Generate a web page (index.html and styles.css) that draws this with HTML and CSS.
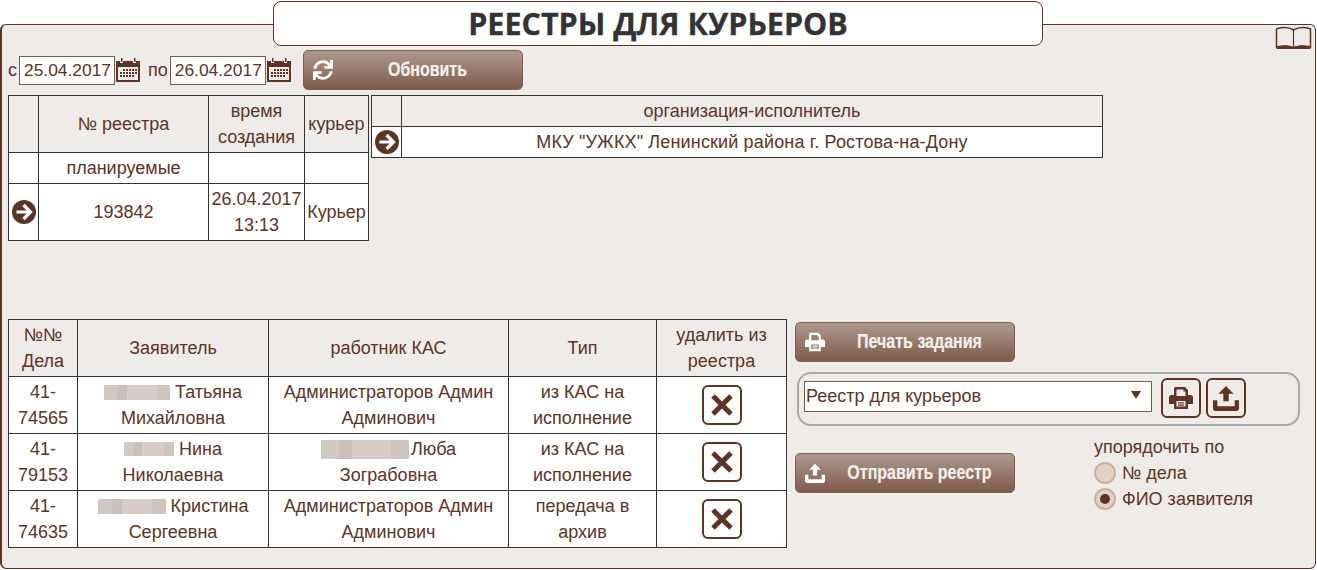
FILE: index.html
```html
<!DOCTYPE html>
<html lang="ru">
<head>
<meta charset="utf-8">
<title>Реестры для курьеров</title>
<link rel="stylesheet" href="styles.css">
</head>
<body>
<svg class="defs" width="0" height="0">
  <symbol id="i-cal" viewBox="0 0 24 24">
    <path fill="#5e3425" d="M0 3h4v2h3V3h10v2h3V3h4v21H0z"/>
    <path fill="#5e3425" d="M5 0h1.500v4H5zM18 0h1.500v4H18z"/>
    <path fill="#efebe8" d="M2 9h20v13H2z"/>
    <path fill="#5e3425" d="M7 11h2v2H7zM10 11h2v2h-2zM13 11h2v2h-2zM16 11h2v2h-2zM19 11h2v2h-2zM4 14h2v2H4zM7 14h2v2H7zM10 14h2v2h-2zM13 14h2v2h-2zM16 14h2v2h-2zM19 14h2v2h-2zM4 17h2v2H4zM7 17h2v2H7zM10 17h2v2h-2zM13 17h2v2h-2zM16 17h2v2h-2z"/>
  </symbol>
  <symbol id="i-sync" viewBox="0 0 512 512">
    <path fill="currentColor" d="M440.650 12.570l4 82.770A247.160 247.160 0 0 0 255.830 8C134.730 8 33.910 94.920 12.290 209.820A12 12 0 0 0 24.090 224h49.050a12 12 0 0 0 11.670-9.260 175.910 175.910 0 0 1 317-56.940l-101.460-4.860a12 12 0 0 0-12.570 12v47.410a12 12 0 0 0 12 12H500a12 12 0 0 0 12-12V12a12 12 0 0 0-12-12h-47.370a12 12 0 0 0-11.980 12.570zM255.830 432a175.610 175.610 0 0 1-146-77.800l101.800 4.870a12 12 0 0 0 12.570-12v-47.400a12 12 0 0 0-12-12H12a12 12 0 0 0-12 12V500a12 12 0 0 0 12 12h47.350a12 12 0 0 0 12-12.600l-4.150-82.570A247.170 247.170 0 0 0 255.830 504c121.110 0 221.930-86.920 243.550-201.820a12 12 0 0 0-11.800-14.180h-49.050a12 12 0 0 0-11.670 9.260A175.860 175.860 0 0 1 255.830 432z"/>
  </symbol>
  <symbol id="i-print" viewBox="0 0 24 24">
    <path fill="currentColor" fill-rule="evenodd" d="M6 1h10l3 3v5h2.500A2.500 2.500 0 0 1 24 11.500V18h-5v5H5v-5H0v-6.500A2.500 2.500 0 0 1 2.500 9H5V2.500A1.500 1.500 0 0 1 6 1zM7.500 3.500V10h9V5.500h-2v-2zM7.500 15v5.500h9V15zM9 16.300h6v1.300H9zM9 18.500h6v1.200H9z"/>
  </symbol>
  <symbol id="i-up" viewBox="0 0 24 24">
    <path fill="currentColor" d="M12 1l7 7h-4.500v7h-5V8H5zM0 14h4v5.500h16V14h4v7.500a2.500 2.500 0 0 1-2.500 2.500h-19A2.500 2.500 0 0 1 0 21.500z"/>
  </symbol>
  <symbol id="i-go" viewBox="0 0 24 24">
    <circle cx="12" cy="12" r="12" fill="#5e3425"/>
    <path fill="none" stroke="#fff" stroke-width="3.200" d="M4.500 12h13.500M11.500 5l7 7-7 7"/>
  </symbol>
  <symbol id="i-x" viewBox="0 0 24 24">
    <path fill="none" stroke="#5e3425" stroke-width="5" d="M3 3l18 18M21 3L3 21"/>
  </symbol>
</svg>

<main class="panel">
  <h1 class="title">РЕЕСТРЫ ДЛЯ КУРЬЕРОВ</h1>
  <svg class="book" viewBox="0 0 36 24" aria-hidden="true">
    <path fill="#efebe8" stroke="#5e3425" stroke-width="1.500" d="M1 21V3c6-2 12-2 17 1 5-3 11-3 17-1v18c-6-1.500-12-1.500-17 1-5-2.500-11-2.500-17-1z"/>
    <path fill="none" stroke="#5e3425" stroke-width="1.200" d="M18 4v18"/>
    <path fill="#5e3425" d="M1 23v-2c6-2 12-2 17 0 5-2 11-2 17 0v2z"/>
  </svg>

  <form class="filter">
    <label class="lbl">с</label>
    <span class="date">25.04.2017</span>
    <svg class="cal"><use href="#i-cal"/></svg>
    <label class="lbl lbl-po">по</label>
    <span class="date">26.04.2017</span>
    <svg class="cal"><use href="#i-cal"/></svg>
    <button type="button" class="btn btn-refresh"><svg class="btn-ic ic-sync"><use href="#i-sync"/></svg><span>Обновить</span></button>
  </form>

  <section class="top-tables">
    <table class="grid t-reg">
      <colgroup><col class="c30"><col class="c170"><col class="c96"><col class="c64"></colgroup>
      <tr class="head"><th></th><th>№ реестра</th><th>время создания</th><th class="nw">курьер</th></tr>
      <tr><td></td><td>планируемые</td><td></td><td></td></tr>
      <tr><td class="go"><svg class="go-ic"><use href="#i-go"/></svg></td><td>193842</td><td>26.04.2017 13:13</td><td class="nw">Курьер</td></tr>
    </table>
    <table class="grid t-org">
      <colgroup><col class="c30"><col></colgroup>
      <tr class="head"><th></th><th>организация-исполнитель</th></tr>
      <tr><td class="go"><svg class="go-ic"><use href="#i-go"/></svg></td><td class="org-name">МКУ "УЖКХ" Ленинский района г. Ростова-на-Дону</td></tr>
    </table>
  </section>

  <section class="bottom">
    <table class="grid t-main">
      <colgroup><col class="c69"><col class="c191"><col class="c240"><col class="c148"><col class="c130"></colgroup>
      <tr class="head"><th>№№ Дела</th><th>Заявитель</th><th>работник КАС</th><th>Тип</th><th>удалить из реестра</th></tr>
      <tr>
        <td>41-74565</td>
        <td><span class="blur b1"></span> Татьяна Михайловна</td>
        <td>Администраторов Админ Админович</td>
        <td>из КАС на исполнение</td>
        <td class="act"><span class="x-btn"><svg class="x-ic"><use href="#i-x"/></svg></span></td>
      </tr>
      <tr>
        <td>41-79153</td>
        <td><span class="blur b2"></span> Нина Николаевна</td>
        <td><span class="blur b3"></span> Люба Зограбовна</td>
        <td>из КАС на исполнение</td>
        <td class="act"><span class="x-btn"><svg class="x-ic"><use href="#i-x"/></svg></span></td>
      </tr>
      <tr>
        <td>41-74635</td>
        <td><span class="blur b4"></span> Кристина Сергеевна</td>
        <td>Администраторов Админ Админович</td>
        <td>передача в архив</td>
        <td class="act"><span class="x-btn"><svg class="x-ic"><use href="#i-x"/></svg></span></td>
      </tr>
    </table>

    <aside class="side">
      <button type="button" class="btn btn-print"><svg class="btn-ic"><use href="#i-print"/></svg><span>Печать задания</span></button>
      <div class="report-box">
        <div class="select">Реестр для курьеров<span class="caret"></span></div>
        <span class="icon-btn"><svg class="ib-ic ib-print"><use href="#i-print"/></svg></span>
        <span class="icon-btn"><svg class="ib-ic"><use href="#i-up"/></svg></span>
      </div>
      <div class="side-row">
        <button type="button" class="btn btn-send"><svg class="btn-ic"><use href="#i-up"/></svg><span>Отправить реестр</span></button>
        <div class="sort">
          <div class="sort-title">упорядочить по</div>
          <div class="radio-row"><span class="radio"></span>№ дела</div>
          <div class="radio-row"><span class="radio on"></span>ФИО заявителя</div>
        </div>
      </div>
    </aside>
  </section>
</main>
</body>
</html>
```
FILE: styles.css
```css
* { box-sizing: border-box; }
html, body { margin: 0; padding: 0; }
body {
  width: 1317px;
  height: 570px;
  overflow: hidden;
  background: #fff;
  font-family: "Liberation Sans", Arial, sans-serif;
  font-size: 18px;
  line-height: 26px;
  color: #5e3425;
}
.defs { display: block; height: 0; }

.panel {
  position: relative;
  width: 1316px;
  height: 545px;
  margin-top: 24px;
  padding: 0 6px;
  background: #efebe8;
  border: 1px solid #5e3425;
  border-left-width: 2px;
  border-radius: 6px;
}
.title {
  width: 770px;
  height: 45px;
  margin: -24px 0 0 265px;
  background: #fff;
  border: 1px solid #5e3425;
  border-radius: 8px;
  text-align: center;
  font-family: "Open Sans", sans-serif;
  font-weight: 700;
  font-size: 30.5px;
  line-height: 43px;
  color: #333;
  -webkit-text-stroke: 0.3px #333;
}
.book {
  position: absolute;
  top: 1px;
  right: 3px;
  width: 37px;
  height: 24px;
}

.filter {
  display: flex;
  align-items: center;
  height: 40px;
  margin-top: 4px;
}
.lbl { margin-right: 2px; }
.lbl-po { margin-left: 8px; margin-right: 2px; }
.date {
  width: 96px;
  height: 29px;
  padding: 0 0 0 4px;
  background: #fff;
  border: 1px solid #7a5a4a;
  font-size: 17.4px;
  line-height: 27px;
  white-space: nowrap;
}
.cal { width: 24px; height: 24px; margin-left: 1px; }

.btn {
  display: flex;
  align-items: center;
  width: 220px;
  height: 40px;
  padding: 0;
  border: 1px solid #7d5e50;
  border-radius: 5px;
  background: linear-gradient(#ad988c 0%, #a28a7d 25%, #8a6a5b 75%, #7f5c4d 100%);
  color: #f3eeeb;
  font-family: "Liberation Sans", sans-serif;
  font-weight: 700;
  font-size: 20px;
}
.btn span {
  flex: 1;
  padding-bottom: 2px;
  text-align: center;
  white-space: nowrap;
  transform: scaleX(0.8);
  -webkit-text-stroke: 0.2px #f3eeeb;
}
.btn-ic { width: 20px; height: 20px; margin-left: 9px; color: #fff; flex: none; }
.btn-refresh { margin-left: 12px; }

.top-tables {
  display: flex;
  align-items: flex-start;
  gap: 2px;
  margin-top: 5px;
}
.grid {
  border-collapse: collapse;
  table-layout: fixed;
  font-weight: 400;
}
.grid th, .grid td {
  border: 1px solid #333;
  padding: 2px;
  text-align: center;
  vertical-align: middle;
  font-weight: 400;
  background: #fff;
}
.grid .head th { background: #efebe8; }
.grid .org-name { letter-spacing: 0.15px; }
.t-reg { width: 360px; }
.t-org { width: 732px; }
.t-main { width: 778px; }
.c30 { width: 30px; }
.c170 { width: 170px; }
.c96 { width: 96px; }
.c64 { width: 64px; }
.c69 { width: 69px; }
.c191 { width: 191px; }
.c240 { width: 240px; }
.c148 { width: 148px; }
.c130 { width: 130px; }
.grid .nw { padding: 2px 0; white-space: nowrap; }
.grid .go { padding: 0; line-height: 0; }
.go-ic { width: 24px; height: 24px; vertical-align: middle; }

.bottom {
  display: flex;
  align-items: flex-start;
  margin-top: 78px;
}
.blur {
  display: inline-block;
  height: 15px;
  vertical-align: -2px;
  background: linear-gradient(90deg, #d3c9c4 0 20%, #cbbfb9 20% 35%, #d6cdc8 35% 80%, #cfc5bf 80% 100%);
}
.b1 { width: 66px; }
.b2 { width: 50px; height: 14px; vertical-align: -1px; }
.b3 { width: 88px; height: 19px; margin-right: -3px; vertical-align: -4px; }
.b4 { width: 68px; }
.act { line-height: 0; }
.x-btn {
  display: inline-flex;
  align-items: center;
  justify-content: center;
  width: 40px;
  height: 40px;
  background: #fff;
  border: 2px solid #5e3425;
  border-radius: 6px;
  vertical-align: middle;
}
.x-ic { width: 24px; height: 24px; }

.side {
  width: 505px;
  margin-left: 8px;
  padding-top: 3px;
}
.report-box {
  display: flex;
  align-items: flex-start;
  width: 503px;
  height: 54px;
  margin: 10px 0 0 2px;
  padding-left: 5px;
  border: 2px solid #aaa;
  border-radius: 14px;
}
.select {
  position: relative;
  width: 348px;
  height: 31px;
  margin-top: 7px;
  padding-left: 1px;
  background: #fff;
  border: 1px solid #7a5a4a;
  line-height: 28px;
}
.caret {
  position: absolute;
  top: 9px;
  right: 10px;
  border-left: 5px solid transparent;
  border-right: 5px solid transparent;
  border-top: 8px solid #5e3425;
}
.icon-btn {
  display: flex;
  align-items: center;
  justify-content: center;
  width: 40px;
  height: 40px;
  margin: 4px 0 0 5px;
  border: 2px solid #5e3425;
  border-radius: 6px;
  color: #5e3425;
}
.select + .icon-btn { margin-left: 9px; }
.ib-ic { width: 26px; height: 26px; }
.ib-print { width: 24px; height: 24px; }
.side-row { display: flex; align-items: flex-start; }
.btn-send { margin-top: 27px; }
.sort { margin: 8px 0 0 79px; }
.sort-title { height: 26px; }
.radio-row { display: flex; align-items: center; height: 26px; }
.radio {
  position: relative;
  width: 22px;
  height: 22px;
  margin-right: 6px;
  background: #e0d2c7;
  border: 2px solid #c9b1a0;
  border-radius: 50%;
}
.radio.on::after {
  content: "";
  position: absolute;
  left: 4px;
  top: 4px;
  width: 10px;
  height: 10px;
  background: #5e3425;
  border-radius: 50%;
}
```
